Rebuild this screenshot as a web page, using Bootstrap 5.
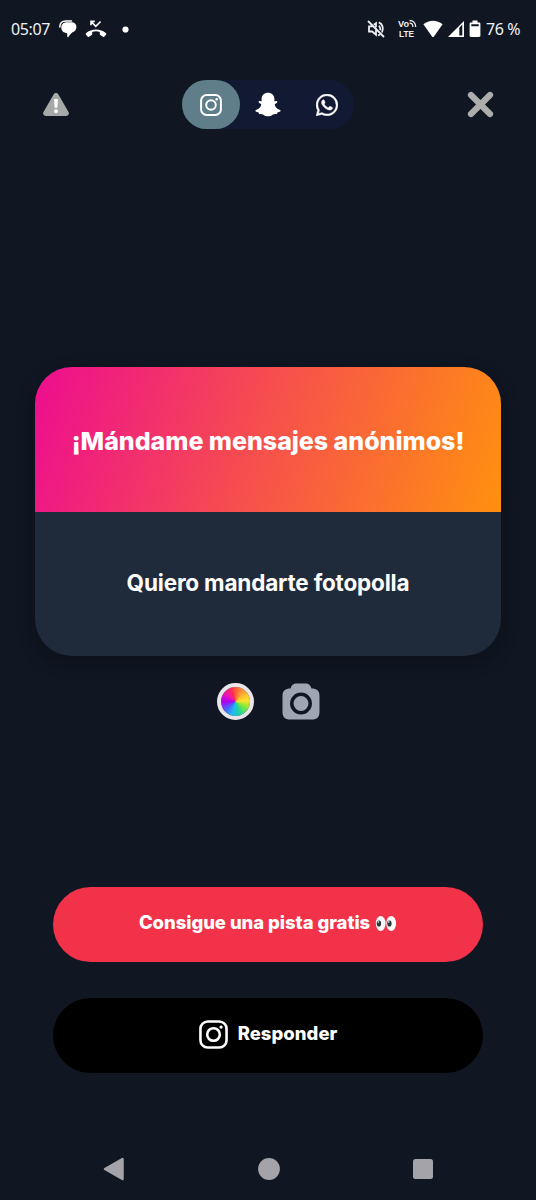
<!DOCTYPE html>
<html lang="es" data-bs-theme="dark">
<head>
<meta charset="utf-8">
<meta name="viewport" content="width=device-width, initial-scale=1">
<title>Mensajes anónimos</title>
<link href="https://cdn.jsdelivr.net/npm/bootstrap@5.3.0/dist/css/bootstrap.min.css" rel="stylesheet">
<style>
  body { background: #101622; color: #fff; font-family: Inter, "Liberation Sans", sans-serif; }
  svg { display: block; flex: none; }
  .phone { width: 536px; height: 1200px; }
  .statusbar { height: 58px; padding: 0 15px 0 11px; font: 16px/20px "Noto Sans", sans-serif; color: #f1f2f4; }
  .clock { width: 48px; letter-spacing: -.4px; }
  .battery-level { width: 35px; margin-left: 5px; letter-spacing: -.4px; white-space: nowrap; }
  .topbar { height: 49px; margin-top: 22px; padding: 0 42.5px 0 43px; }
  .networks { width: 172px; height: 49px; background: #121a33; }
  .networks .nav-link { width: 57.3px; height: 49px; padding: 0; color: #fff; border-radius: 25px; }
  .networks .nav-link.active { background: #607e8a; }
  .message { margin: 238px 35px 0; height: 289px; border: 0; border-radius: 37px; background: #1f2a3b; box-shadow: 0 6px 18px rgba(0,0,0,.28); }
  .message-title { height: 144.5px; background: linear-gradient(107deg, #ee118c 3%, #f64c50 46%, #ff8f10 99%); }
  .message-title h1 { font-size: 25px; font-weight: 800; letter-spacing: -.03px; padding-top: 3px; }
  .message-text { font-size: 22.5px; font-weight: 650; letter-spacing: -.18px; padding-bottom: 2px; }
  .tools { gap: 28px; margin-top: 27px; height: 37px; }
  .wheel { width: 37px; height: 37px; border: 4px solid #e8e6e8; background: conic-gradient(from 0deg, #ff5b3c, #ffb02e 45deg, #ffe22e 85deg, #76e83c 125deg, #1fd5a0 160deg, #20b8f5 195deg, #4b62ff 230deg, #b000f0 270deg, #ef18b0 310deg, #ff2858 340deg, #ff5b3c) padding-box; }
  .actions { margin: 166.5px 53px 0; gap: 36px; }
  .actions .btn { height: 75px; font-size: 18.5px; font-weight: 800; border: 0; color: #fff; padding: 0 0 2px; }
  .btn-hint { background: #f13249; letter-spacing: -.06px; }
  .btn-reply { background: #000; letter-spacing: .02px; }
  .sysnav { margin-top: 84.5px; padding: 0 103.500px 0 102.500px; height: 24px; color: #a3a3a9; }
</style>
</head>
<body>
<svg width="0" height="0" class="position-absolute" aria-hidden="true">
  <symbol id="camera-logo" viewBox="0 0 28 28">
    <rect x="1.4" y="1.4" width="25.2" height="25.2" rx="7" fill="none" stroke="currentColor" stroke-width="2.5"/>
    <circle cx="14" cy="14" r="6.1" fill="none" stroke="currentColor" stroke-width="2.5"/>
    <circle cx="21.3" cy="6.8" r="1.6" fill="currentColor"/>
  </symbol>
</svg>
<main class="phone d-flex flex-column overflow-hidden">
  <div class="statusbar d-flex align-items-center">
    <span class="clock">05:07</span>
    <svg width="18" height="18" viewBox="0 0 18 18"><path d="M.8 7C.8 3.2 3.200.9 7 .9h5.500" fill="none" stroke="#fff" stroke-width="1.500" stroke-linecap="round"/><path d="M2.300 7.600C2.300 4.400 4.600 2.300 7.800 2.300h4.600c3 0 5 1.900 5 4.800 0 2.700-1.500 4.600-3.900 5.200-1.400 1.200-2.800 2.600-4.200 4.600-.4.500-1.100.3-1.100-.4v-3.300C4.600 13 2.300 11 2.300 7.600z" fill="#fff"/></svg>
    <svg class="ms-2" width="22" height="18" viewBox="0 0 22 18"><path d="M1 13.2c5.500-5 14.500-5 20 0 .5.500.5 1 0 1.500l-1.800 2c-.4.400-.8.500-1.300.1l-2.600-1.700c-.4-.3-.5-.6-.5-1v-2.200c-2.400-.8-5.200-.8-7.600 0v2.200c0 .4-.1.700-.5 1l-2.600 1.700c-.5.400-.9.300-1.300-.1l-1.800-2c-.5-.5-.5-1 0-1.500z" fill="#fff"/><path d="M6 5.200V1.400h3.800M6.300 1.700l4.500 4.600 4.800-4.800" fill="none" stroke="#fff" stroke-width="1.600"/></svg>
    <svg style="margin-left:15px" width="7" height="7"><circle cx="3.500" cy="3.500" r="3.100" fill="#fff"/></svg>
    <div class="ms-auto d-flex align-items-center">
      <svg width="18" height="18" viewBox="0 0 18 18" fill="none" stroke="#eceef1" stroke-width="1.800"><path d="M1 1l16 16M5.500 6.300H2v5.200h3.200l3.800 3.300V9.800M6.800 4.800L9 3.200v4M11.800 5.700c1.200.8 1.700 2 1.600 4.500M11.800 2.300c4 1.600 5 6 3.200 10.200M11 15.500l2-1"/></svg>
      <svg style="margin-left:13px" width="20" height="22" viewBox="0 0 20 22"><g fill="#eceef1" font-family="Liberation Sans" font-weight="700" font-size="8.400"><text x="0" y="9" textLength="11" lengthAdjust="spacingAndGlyphs">Vo</text><text x="1" y="18.800" textLength="15" lengthAdjust="spacingAndGlyphs">LTE</text></g><g fill="none" stroke="#eceef1" stroke-width="1.300"><path d="M11.500 2.500c3.700 0 6.200 2.600 6.200 6.500M11.500 5.200c2.200 0 3.400 1.400 3.400 3.700"/></g></svg>
      <svg style="margin-left:5px" width="20" height="18" viewBox="0 0 20 18"><path d="M.4 4.300C6-.5 14-.5 19.600 4.300L11 16.500c-.6.800-1.400.8-2 0z" fill="#fff"/></svg>
      <svg style="margin-left:4px" width="18" height="18" viewBox="0 0 18 18"><path fill-rule="evenodd" d="M17 1v16H1zM12.300 7.800v7.600h3V4.600z" fill="#fff"/></svg>
      <svg style="margin-left:4px" width="12" height="18" viewBox="0 0 12 18"><path fill-rule="evenodd" d="M3.500.5h5v2H10c1 0 1.400.5 1.400 1.400v11.700c0 1-.4 1.400-1.400 1.400H2c-1 0-1.400-.4-1.400-1.400V3.900C.6 3 1 2.500 2 2.500h1.500zM2.300 4.200v2h7.400v-2z" fill="#fff"/></svg>
      <span class="battery-level">76 %</span>
    </div>
  </div>

  <header class="topbar d-flex align-items-center justify-content-between">
    <svg width="26" height="25" viewBox="0 0 26 25"><path d="M10.600 2.400c1.100-1.800 3.700-1.800 4.800 0l10 17.300c1.200 2.200-.2 4.300-2.400 4.300H3c-2.200 0-3.600-2.100-2.400-4.300z" fill="#a7a8a8"/><path d="M11.100 7h3.800l-.5 8.800h-2.800z" fill="#fff"/><circle cx="13" cy="19.200" r="1.900" fill="#fff"/></svg>
    <nav class="networks nav rounded-pill flex-nowrap" style="margin-left:1px">
      <a class="nav-link active d-flex align-items-center justify-content-center" href="#" aria-label="Instagram"><svg width="22" height="22"><use href="#camera-logo"/></svg></a>
      <a class="nav-link d-flex align-items-center justify-content-center" href="#" aria-label="Snapchat"><svg width="26" height="25" viewBox="0 0 26 25" fill="#fff"><path d="M13 .8c3.800 0 6.400 2.600 6.400 6.300v2.100l1.800-.2c1.300 0 1.600 1.300.5 2l-2 1.300c.3 2.700 2.200 4.600 5.300 5.600 1 .5.6 1.600-.4 1.900l-2.200.6-.5 1.700c-1.400-.1-3.100-.2-4.300.7-1.300 1-2.700 1.500-4.600 1.500s-3.300-.5-4.600-1.500c-1.200-.9-2.900-.8-4.300-.7l-.5-1.700-2.200-.6c-1-.3-1.400-1.400-.4-1.900 3.100-1 5-2.900 5.300-5.600l-2-1.300c-1.100-.7-.8-2 .5-2l1.800.2V7.100C6.600 3.400 9.200.8 13 .8z"/></svg></a>
      <a class="nav-link d-flex align-items-center justify-content-center ps-1" href="#" aria-label="WhatsApp"><svg width="22" height="22" viewBox="0 0 16 16" fill="#fff" stroke="#fff" stroke-width=".25"><path d="M13.601 2.326A7.850 7.850 0 0 0 7.994 0C3.627 0 .068 3.558.064 7.926c0 1.399.366 2.760 1.057 3.965L0 16l4.204-1.102a7.900 7.900 0 0 0 3.790.965h.004c4.368 0 7.926-3.558 7.930-7.930A7.900 7.900 0 0 0 13.600 2.326zM7.994 14.521a6.600 6.600 0 0 1-3.356-.920l-.240-.144-2.494.654.666-2.433-.156-.251a6.560 6.560 0 0 1-1.007-3.505c0-3.626 2.957-6.584 6.591-6.584a6.560 6.560 0 0 1 4.660 1.931 6.560 6.560 0 0 1 1.928 4.660c-.004 3.639-2.961 6.592-6.592 6.592m3.615-4.934c-.197-.099-1.170-.578-1.353-.646-.182-.065-.315-.099-.445.099-.133.197-.513.646-.627.775-.114.133-.232.148-.430.050-.197-.100-.836-.308-1.592-.985-.590-.525-.985-1.175-1.103-1.372-.114-.198-.011-.304.088-.403.087-.088.197-.232.296-.346.100-.114.133-.198.198-.330.065-.134.034-.248-.015-.347-.050-.099-.445-1.076-.612-1.470-.160-.389-.323-.335-.445-.340-.114-.007-.247-.007-.380-.007a.730.730 0 0 0-.529.247c-.182.198-.691.677-.691 1.654s.710 1.916.810 2.049c.098.133 1.394 2.132 3.383 2.992.470.205.840.326 1.129.418.475.152.904.129 1.246.080.380-.058 1.171-.480 1.338-.943.164-.464.164-.860.114-.943-.049-.084-.182-.133-.380-.232"/></svg></a>
    </nav>
    <svg width="27" height="27" viewBox="0 0 27 27"><path d="M4 4l19 19M23 4L4 23" stroke="#adadad" stroke-width="6.200" stroke-linecap="round"/></svg>
  </header>

  <section class="message card overflow-hidden">
    <div class="message-title d-flex align-items-center justify-content-center"><h1 class="mb-0 text-nowrap">¡Mándame mensajes anónimos!</h1></div>
    <div class="message-text flex-fill d-flex align-items-center justify-content-center text-white text-nowrap">Quiero mandarte fotopolla</div>
  </section>

  <div class="tools d-flex justify-content-center">
    <div class="wheel rounded-circle"></div>
    <svg width="38" height="37" viewBox="0 0 38 37"><path d="M8.500 5.500C9.500 2 11.500.5 14 .5h10c2.500 0 4.500 1.500 5.500 5 5.200 0 8 2 8 7.500v16c0 5-2.500 7.500-7.500 7.500H8c-5 0-7.500-2.500-7.500-7.500V13c0-5.500 2.800-7.500 8-7.500z" fill="#9fa5b2"/><circle cx="19" cy="20.500" r="9.200" fill="none" stroke="#101622" stroke-width="3.500"/></svg>
  </div>

  <div class="actions d-flex flex-column">
    <button class="btn btn-hint rounded-pill d-flex align-items-center justify-content-center"><span>Consigue una pista gratis</span>
      <svg style="margin-left:5px" width="22" height="19" viewBox="0 0 22 19" role="img" aria-label="ojos"><ellipse cx="5.700" cy="9.500" rx="4.900" ry="7.600" fill="#fafafa"/><ellipse cx="16.200" cy="9.500" rx="4.900" ry="7.600" fill="#fafafa"/><ellipse cx="3.900" cy="9.500" rx="2.200" ry="3.100" fill="#26383d"/><ellipse cx="14.400" cy="9.500" rx="2.200" ry="3.100" fill="#26383d"/><circle cx="3.300" cy="8" r=".8" fill="#fff"/><circle cx="13.800" cy="8" r=".8" fill="#fff"/></svg>
    </button>
    <button class="btn btn-reply rounded-pill d-flex align-items-center justify-content-center"><svg width="29" height="29"><use href="#camera-logo"/></svg><span style="margin-left:10px">Responder</span></button>
  </div>

  <footer class="sysnav d-flex align-items-center justify-content-between">
    <svg width="22" height="24" viewBox="0 0 22 24"><path d="M2 12L19.500 2v20z" fill="currentColor" stroke="currentColor" stroke-width="2.500" stroke-linejoin="round"/></svg>
    <svg width="22" height="22"><circle cx="11" cy="11" r="10.900" fill="currentColor"/></svg>
    <svg width="20" height="20"><rect width="20" height="20" rx="2.500" fill="currentColor"/></svg>
  </footer>
</main>
<script src="https://cdn.jsdelivr.net/npm/bootstrap@5.3.0/dist/js/bootstrap.bundle.min.js"></script>
</body>
</html>
